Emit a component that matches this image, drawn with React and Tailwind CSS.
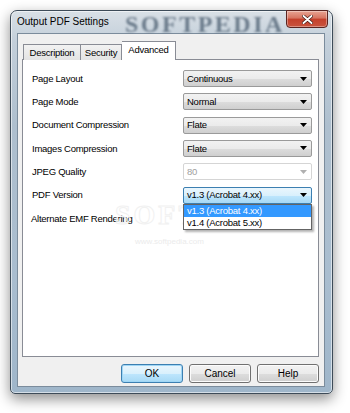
import React from "react";

function Arrow({ gray }) {
  return (
    <svg width="7" height="4" viewBox="0 0 7 4" className="shrink-0">
      <path d="M0 0H7L3.5 4Z" fill={gray ? "#b0b0b0" : "#000"} />
    </svg>
  );
}

function Combo({ value, disabled, focused, children }) {
  let cls =
    "relative h-[17px] w-[129px] rounded-[2px] border flex items-center justify-between pl-[3px] pr-[4px] ";
  if (disabled) cls += "border-[#d5d5d5] bg-white text-[#a0a0a0]";
  else if (focused)
    cls +=
      "border-[#3c7fb1] bg-[linear-gradient(180deg,#eaf6fd_0%,#d9f0fc_50%,#bee6fd_51%,#a7d9f5_100%)]";
  else
    cls +=
      "border-[#9a9a9a] bg-[linear-gradient(180deg,#f2f2f2_0%,#ebebeb_50%,#dddddd_51%,#cfcfcf_100%)]";
  return (
    <div className={cls}>
      <span className="leading-none">{value}</span>
      <Arrow gray={disabled} />
      {children}
    </div>
  );
}

function Row({ label, children }) {
  return (
    <div className="flex items-center h-[17px]">
      <div className="w-[160px] pl-[9px] leading-none">{label}</div>
      {children}
    </div>
  );
}

function Btn({ label, def }) {
  return (
    <div
      className={
        "w-[62px] h-[19px] rounded-[3px] border flex items-center justify-center leading-none " +
        (def
          ? "border-[#3c7fb1] bg-[linear-gradient(180deg,#eaf6fd_0%,#d9f0fc_50%,#bee6fd_51%,#a7d9f5_100%)] shadow-[inset_0_0_0_1px_#9fd6f5]"
          : "border-[#707070] bg-[linear-gradient(180deg,#f2f2f2_0%,#ebebeb_50%,#dddddd_51%,#cfcfcf_100%)] shadow-[inset_0_0_0_1px_#fcfcfc]")
      }
    >
      {label}
    </div>
  );
}

export default function App() {
  return (
    <div className="w-[350px] h-[413px] bg-white pt-[10px] pl-[10px] overflow-hidden font-['Liberation_Sans',Arial,sans-serif] text-black">
      <div className="relative w-[323px] h-[384px] rounded-t-[7px] rounded-b-[5px] border border-[#3d4b58] bg-[linear-gradient(180deg,#d9e0e6_0%,#c3cfda_8%,#aebfce_30%,#a9bdcf_70%,#9fb6ca_100%)] shadow-[0_5px_14px_rgba(0,0,0,0.45),inset_0_0_0_1px_rgba(255,255,255,0.55)] flex flex-col">
        {/* title bar */}
        <div className="relative h-[22px] flex items-start justify-between pl-[6px] pr-[4px]">
          <div className="pointer-events-none absolute left-[114px] top-[1px] text-[24px] leading-none font-bold tracking-[2.5px] text-[rgba(55,75,95,0.65)] blur-[0.8px] font-['Liberation_Serif',serif]">
            SOFTPEDIA
          </div>
          <div className="relative mt-[6px] text-[10px] leading-none">Output PDF Settings</div>
          <div className="relative -mt-[1px] w-[42px] h-[18px] rounded-b-[4px] border border-[#5a2420] bg-[linear-gradient(180deg,#e8a493_0%,#d6735f_45%,#c4402b_50%,#c9543e_100%)] shadow-[inset_0_0_0_1px_rgba(255,255,255,0.35)] flex items-center justify-center">
            <svg width="11" height="9" viewBox="0 0 11 9">
              <path
                d="M1.5 1L9.5 8M9.5 1L1.5 8"
                stroke="#3a1510"
                strokeWidth="3.2"
                strokeLinecap="round"
              />
              <path
                d="M1.5 1L9.5 8M9.5 1L1.5 8"
                stroke="#fff"
                strokeWidth="1.9"
                strokeLinecap="round"
              />
            </svg>
          </div>
        </div>

        {/* client area */}
        <div className="ml-[6px] mr-[7px] mb-[6px] h-[354px] border border-[#7b8c9c] bg-[#f0f0f0] pl-[4px] pr-[5px] pt-[7px] flex flex-col text-[9.5px] tracking-[-0.25px]">
          {/* tabs */}
          <div className="flex items-end h-[19px] ml-[1px] -mb-[1px] relative z-10">
            <div className="h-[16px] w-[57px] border border-r-0 border-b-0 border-[#898c95] bg-[linear-gradient(180deg,#f2f2f2,#e3e3e3)] flex items-center justify-center leading-none">
              Description
            </div>
            <div className="h-[16px] w-[42px] border border-b-0 border-[#898c95] bg-[linear-gradient(180deg,#f2f2f2,#e3e3e3)] flex items-center justify-center leading-none">
              Security
            </div>
            <div className="h-[19px] w-[54px] border border-l-0 border-b-0 border-[#898c95] bg-white flex items-start justify-center pt-[3px] leading-none">
              Advanced
            </div>
          </div>
          <div className="relative h-[298px] border border-[#898c95] bg-white pt-[10px] flex flex-col gap-[6.33px]">
            <div className="pointer-events-none absolute left-[92px] top-[141px] text-[28px] font-bold tracking-[3px] leading-none text-transparent [-webkit-text-stroke:1px_#f1f1f1] font-['Liberation_Serif',serif]">
              SOFTPEDIA
            </div>
            <div className="pointer-events-none absolute left-[112px] top-[178px] text-[8px] tracking-normal leading-none text-[#ebebeb]">
              www.softpedia.com
            </div>
            <Row label="Page Layout">
              <Combo value="Continuous" />
            </Row>
            <Row label="Page Mode">
              <Combo value="Normal" />
            </Row>
            <Row label="Document Compression">
              <Combo value="Flate" />
            </Row>
            <Row label="Images Compression">
              <Combo value="Flate" />
            </Row>
            <Row label="JPEG Quality">
              <Combo value="80" disabled />
            </Row>
            <Row label="PDF Version">
              <Combo value="v1.3 (Acrobat 4.xx)" focused>
                <div className="absolute left-[-1px] top-[16px] w-[129px] border border-[#646464] bg-white shadow-[2px_2px_2px_rgba(0,0,0,0.3)] z-20">
                  <div className="h-[12px] bg-[#3399ff] text-white flex items-center pl-[3px] leading-none">
                    v1.3 (Acrobat 4.xx)
                  </div>
                  <div className="h-[12px] flex items-center pl-[3px] leading-none">
                    v1.4 (Acrobat 5.xx)
                  </div>
                </div>
              </Combo>
            </Row>
            <div className="flex items-center h-[17px]">
              <div className="pl-[8px] leading-none">Alternate EMF Rendering</div>
            </div>
          </div>
          {/* buttons */}
          <div className="mt-[7px] flex justify-end gap-[6px] text-[10px] tracking-normal">
            <Btn label="OK" def />
            <Btn label="Cancel" />
            <Btn label="Help" />
          </div>
        </div>
      </div>
    </div>
  );
}
